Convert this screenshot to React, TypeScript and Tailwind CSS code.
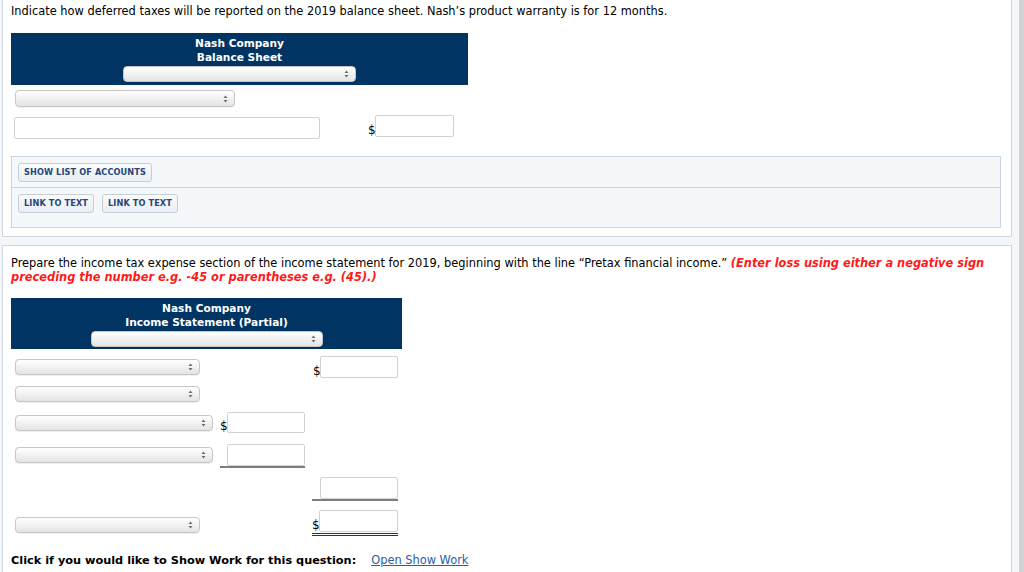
import React from 'react';

const font = "font-['DejaVu_Sans',Verdana,sans-serif]";

const Arrows = () => (
  <svg width="5" height="8" viewBox="0 0 5 8" className="shrink-0">
    <path d="M2.5 0.5 L4.5 3 L0.5 3 Z" fill="#6b6b6b" />
    <path d="M2.5 7.5 L4.5 5 L0.5 5 Z" fill="#6b6b6b" />
  </svg>
);

const Select = ({ w, className = '' }: { w: string; className?: string }) => (
  <div
    className={`${w} h-[16px] rounded-[4px] border border-[#c6c6c6] bg-gradient-to-b from-[#ffffff] to-[#e4e4e4] flex items-center justify-end pr-[6px] shadow-[0_1px_0_rgba(0,0,0,0.06)] ${className}`}
  >
    <Arrows />
  </div>
);

const Input = ({ w = 'w-[78px]', h = 'h-[22px]' }: { w?: string; h?: string }) => (
  <div className={`${w} ${h} bg-white border border-[#d2d2d2] rounded-[2px] shrink-0`} />
);

const Dollar = () => <span className="text-[12px] leading-[12px] text-black w-[7px] pb-[1px]">$</span>;

const Btn = ({ children }: { children: React.ReactNode }) => (
  <div className="h-[19px] px-[5px] flex items-center rounded-[3px] border border-[#c5ced9] bg-gradient-to-b from-[#fbfcfd] to-[#e9eef3] text-[8.2px] font-bold text-[#27467a] tracking-[0.1px]">
    {children}
  </div>
);

export default function App() {
  return (
    <div className={`w-[1024px] h-[572px] overflow-hidden bg-[#f4f7fa] flex ${font}`}>
      <div className="w-[1019px] pl-[2px] pr-[7px] flex flex-col">
        {/* Part 1 */}
        <div className="h-[237px] bg-white border-x border-b border-[#cfd7e1] pl-[8px] pt-[4px]">
          <p className="text-[11.4px] leading-[15px] text-black">
            Indicate how deferred taxes will be reported on the 2019 balance sheet. Nash’s product warranty is for 12 months.
          </p>

          <div className="mt-[14px] w-[457px] h-[52px] bg-[#003462] flex flex-col items-center pt-[3px]">
            <div className="text-[10.6px] leading-[14px] font-bold text-white">Nash Company</div>
            <div className="text-[10.6px] leading-[14px] font-bold text-white">Balance Sheet</div>
            <Select w="w-[233px]" className="mt-[2px]" />
          </div>

          <Select w="w-[220px]" className="mt-[5px] ml-[4px] h-[17px]" />

          <div className="flex items-start mt-[10px] ml-[3px] h-[24px]">
            <div className="w-[306px] h-[22px] bg-white border border-[#d2d2d2] rounded-[2px]" />
            <div className="flex items-end ml-[48px] -mt-[2px] h-[22px]">
              <Dollar />
              <Input w="w-[79px]" />
            </div>
          </div>

          <div className="mt-[15px] w-[990px] border border-[#cbd5e1] bg-[#f5f8fb]">
            <div className="h-[31px] flex items-start pt-[6px] px-[6px] border-b border-[#cbd5e1]">
              <Btn>SHOW LIST OF ACCOUNTS</Btn>
            </div>
            <div className="h-[39px] flex items-start pt-[6px] px-[6px] gap-[8px]">
              <Btn>LINK TO TEXT</Btn>
              <Btn>LINK TO TEXT</Btn>
            </div>
          </div>
        </div>

        {/* Part 2 */}
        <div className="mt-[8px] flex-1 bg-white border-x border-t border-[#cfd7e1] pl-[8px] pt-[10px]">
          <p className="text-[11.4px] leading-[14px] text-black w-[990px]">
            Prepare the income tax expense section of the income statement for 2019, beginning with the line “Pretax financial income.”{' '}
            <span className="text-[#ff1a1a] font-bold italic">
              (Enter loss using either a negative sign preceding the number e.g. -45 or parentheses e.g. (45).)
            </span>
          </p>

          <div className="mt-[14px] w-[391px] h-[51px] bg-[#003462] flex flex-col items-center pt-[3px]">
            <div className="text-[10.6px] leading-[14px] font-bold text-white">Nash Company</div>
            <div className="text-[10.6px] leading-[14px] font-bold text-white">Income Statement (Partial)</div>
            <Select w="w-[232px]" className="mt-[2px]" />
          </div>

          {/* row 1 */}
          <div className="flex h-[26px] items-center mt-[5px]">
            <div className="w-[202px]"><Select w="w-[185px]" className="ml-[4px]" /></div>
            <div className="w-[92px]" />
            <div className="w-[93px] flex items-end pl-[8px]"><Dollar /><Input /></div>
          </div>
          {/* row 2 */}
          <div className="flex h-[28px] items-center">
            <div className="w-[202px]"><Select w="w-[185px]" className="ml-[4px]" /></div>
          </div>
          {/* row 3 */}
          <div className="flex h-[29px] items-center">
            <div className="w-[202px]"><Select w="w-[198px]" className="ml-[4px]" /></div>
            <div className="w-[92px] flex items-end pl-[7px]"><Dollar /><Input w="w-[78px]" h="h-[21px]" /></div>
          </div>
          {/* row 4 */}
          <div className="flex h-[34px] items-start">
            <div className="w-[202px] pt-[10px]"><Select w="w-[198px]" className="ml-[4px]" /></div>
            <div className="w-[92px] pl-[7px] pt-[7px]">
              <div className="flex justify-end border-b-2 border-[#7d7d7d]"><Input w="w-[78px]" h="h-[22px]" /></div>
            </div>
          </div>
          {/* row 5 */}
          <div className="flex h-[34px] items-start">
            <div className="w-[202px]" />
            <div className="w-[92px]" />
            <div className="w-[93px] pl-[7px] pt-[6px]">
              <div className="flex justify-end border-b-2 border-[#7d7d7d]"><Input w="w-[78px]" h="h-[22px]" /></div>
            </div>
          </div>
          {/* row 6 */}
          <div className="flex h-[35px] items-start">
            <div className="w-[202px] pt-[12px]"><Select w="w-[185px]" className="ml-[4px]" /></div>
            <div className="w-[92px]" />
            <div className="w-[93px] pl-[7px] pt-[5px]">
              <div className="flex items-end border-b-[3px] border-double border-[#333] pb-[1px]"><Dollar /><Input w="w-[79px]" h="h-[22px]" /></div>
            </div>
          </div>

          <div className="mt-[13px] flex items-baseline leading-[14px]">
            <span className="text-[11.3px] font-bold text-black">Click if you would like to Show Work for this question:</span>
            <span className="ml-[15px] text-[11.4px] text-[#2a5ea8] underline">Open Show Work</span>
          </div>
        </div>
      </div>
      <div className="w-[5px] bg-[#d3d3d3]" />
    </div>
  );
}
